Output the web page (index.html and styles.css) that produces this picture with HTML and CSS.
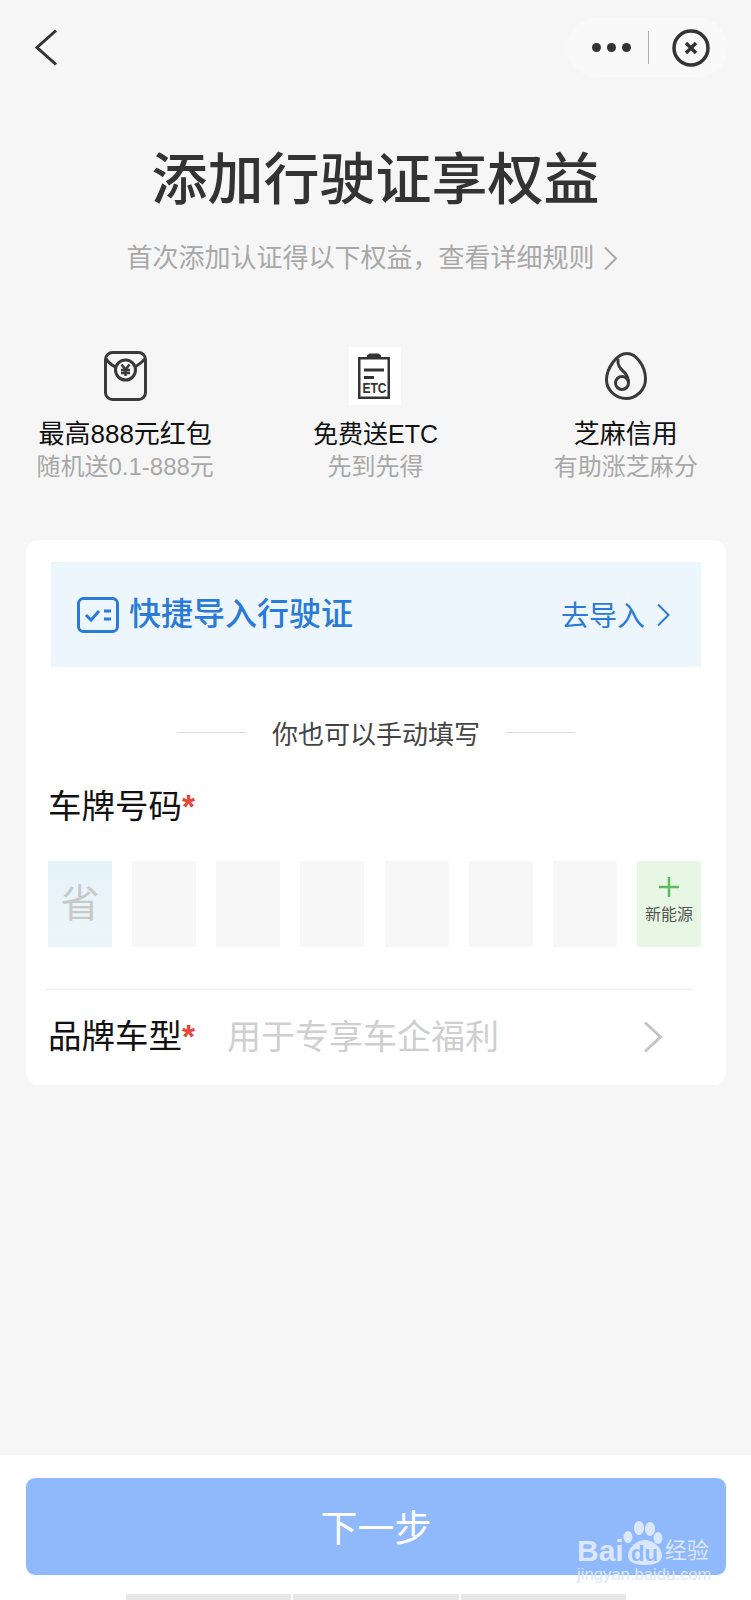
FILE: index.html
```html
<!DOCTYPE html>
<html lang="zh-CN">
<head>
    <meta charset="UTF-8">
    <meta name="viewport" content="width=device-width, initial-scale=1.0">
    <title>添加行驶证享权益</title>
    <link rel="stylesheet" href="styles.css">
</head>
<body>
    <div class="page">
        <header class="top-bar">
            <svg class="back" width="24" height="37" viewBox="0 0 24 37"><path d="M22 1.5 3 18.5 22 35.5"/></svg>
            <div class="capsule">
                <div class="dots"><span></span><span></span><span></span></div>
                <div class="capsule-line"></div>
                <svg class="close" width="38" height="38" viewBox="0 0 38 38"><circle cx="19" cy="19" r="17"/><path d="M14 14 24 24M24 14 14 24"/></svg>
            </div>
        </header>

        <h1>添加行驶证享权益</h1>
        <p class="subtitle">首次添加认证得以下权益，查看详细规则
            <svg width="15" height="25" viewBox="0 0 15 25"><path d="M2 1.5 13 12.5 2 23.5"/></svg>
        </p>

        <!-- 权益 -->
        <section class="benefits">
            <div class="benefit">
                <svg class="benefit-icon" width="44" height="50" viewBox="0 0 44 50">
                    <rect x="2.500" y="1.500" width="40" height="47" rx="7"/>
                    <path d="M3 8C6 12 10 15 13 16M42 8C38 12 34 15 31 16"/>
                    <circle cx="22.500" cy="19" r="10"/>
                    <path class="thin" d="M18.500 13.500 22.500 18.500 26.500 13.500M22.500 18.500V25M18 19H27M18 22H27"/>
                </svg>
                <div class="benefit-name">最高888元红包</div>
                <div class="benefit-desc">随机送0.1-888元</div>
            </div>
            <div class="benefit">
                <div class="etc-box">
                    <svg class="etc-icon" width="36" height="46" viewBox="0 0 36 46">
                        <path d="M1 4H10V2.500L12.500 0.500H21.500L24 2.500V4H33V46H1Z"/>
                        <rect class="etc-paper" x="3.500" y="6.500" width="27" height="37"/>
                        <rect x="7" y="15.500" width="20" height="3"/>
                        <rect x="7" y="23" width="10" height="3"/>
                    </svg>
                    <span class="etc-text">ETC</span>
                </div>
                <div class="benefit-name narrow">免费送ETC</div>
                <div class="benefit-desc">先到先得</div>
            </div>
            <div class="benefit">
                <svg class="benefit-icon" width="44" height="50" viewBox="0 0 44 50">
                    <path d="M23 2.500C32 2.500 41.500 15 41.500 28 41.500 39 32 47.500 22 47.500 12 47.500 2.500 39 2.500 29 2.500 17 13 2.500 23 2.500Z"/>
                    <path d="M14 8C13 15 17 18 21 22 23.500 25 24.500 28 24.500 32"/>
                    <circle cx="18" cy="32" r="6.500"/>
                </svg>
                <div class="benefit-name">芝麻信用</div>
                <div class="benefit-desc">有助涨芝麻分</div>
            </div>
        </section>

        <section class="card">
            <div class="import-bar">
                <svg class="import-icon" width="42" height="36" viewBox="0 0 42 36">
                    <rect x="1.500" y="1.500" width="39" height="33" rx="5"/>
                    <path d="M9 18 14 23 22 14M27 14H34M27 22H34"/>
                </svg>
                <span class="import-title">快捷导入行驶证</span>
                <span class="import-link">去导入</span>
                <svg class="import-arrow" width="14" height="24" viewBox="0 0 14 24"><path d="M2 1.500 12.500 12 2 22.500"/></svg>
            </div>

            <div class="or-row">
                <span class="or-line"></span>
                <span class="or-text">你也可以手动填写</span>
                <span class="or-line"></span>
            </div>

            <div class="field-label">车牌号码<span class="star">*</span></div>
            <div class="plate">
                <div class="plate-cell province">省</div>
                <div class="plate-cell"></div>
                <div class="plate-cell"></div>
                <div class="plate-cell"></div>
                <div class="plate-cell"></div>
                <div class="plate-cell"></div>
                <div class="plate-cell"></div>
                <div class="plate-cell energy">
                    <svg width="22" height="22" viewBox="0 0 22 22"><path d="M11 1V21M1 11H21"/></svg>
                    <span>新能源</span>
                </div>
            </div>

            <div class="brand-row">
                <div class="field-label brand-label">品牌车型<span class="star">*</span></div>
                <div class="brand-hint">用于专享车企福利</div>
                <svg class="brand-arrow" width="20" height="32" viewBox="0 0 20 32"><path d="M2 1.500 17.500 16 2 30.500"/></svg>
            </div>
        </section>

        <footer class="footer">
            <button class="next-btn">下一步</button>
            <div class="home-bar"><span></span><span></span><span></span></div>

            <!-- 水印 -->
            <div class="watermark">
                <div class="wm-top">
                    <span class="wm-bai">Bai</span>
                    <svg class="wm-paw" width="42" height="46" viewBox="0 0 42 46">
                        <ellipse cx="17" cy="8" rx="5" ry="7"/>
                        <ellipse cx="28" cy="9" rx="5" ry="7"/>
                        <ellipse cx="6" cy="17" rx="4.500" ry="6"/>
                        <ellipse cx="36" cy="18" rx="4.500" ry="6"/>
                        <path d="M23 20C31 20 40 27 40 36 40 42 33 45 23 45 13 45 6 42 6 36 6 27 15 20 23 20Z"/>
                    </svg>
                    <span class="wm-du">du</span>
                    <span class="wm-jy">经验</span>
                </div>
                <div class="wm-url">jingyan.baidu.com</div>
            </div>
        </footer>
    </div>
</body>
</html>
```

FILE: styles.css
```css
* {
    box-sizing: border-box;
}

body {
    margin: 0;
    padding: 0;
    background-color: #f6f6f6;
    color: #333;
    font-family: "Liberation Sans", "Noto Sans CJK SC", sans-serif;
}

svg path, svg circle, svg rect {
    fill: none;
}

.page {
    display: flex;
    flex-direction: column;
    height: 1600px;
    overflow: hidden;
}

/* top bar */
.top-bar {
    display: flex;
    align-items: center;
    justify-content: space-between;
    padding: 18px 23px 0 34px;
    height: 77px;
}

.back path {
    stroke: #333;
    stroke-width: 3;
}

.capsule {
    display: flex;
    align-items: center;
    width: 161px;
    height: 59px;
    padding-left: 25px;
    background-color: #f9f9f9;
    border-radius: 30px;
}

.dots {
    display: flex;
    gap: 6px;
}

.dots span {
    width: 9px;
    height: 9px;
    border-radius: 50%;
    background-color: #333;
}

.capsule-line {
    width: 1px;
    height: 33px;
    margin-left: 17px;
    background-color: #aaa;
}

.close {
    margin-left: 23px;
}

.close circle, .close path {
    stroke: #333;
    stroke-width: 3.5;
}

/* heading */
h1 {
    margin: 73px 0 0;
    font-size: 56px;
    line-height: 60px;
    font-weight: 500;
    text-align: center;
    color: #333;
}

.subtitle {
    display: flex;
    align-items: center;
    justify-content: center;
    gap: 8px;
    margin: 30px 0 0;
    padding-right: 7px;
    font-size: 26px;
    line-height: 36px;
    color: #a8a8a8;
}

.subtitle svg path {
    stroke: #a8a8a8;
    stroke-width: 2;
}

/* benefits */
.benefits {
    display: grid;
    grid-template-columns: repeat(3, 1fr);
    margin-top: 75px;
}

.benefit {
    display: flex;
    flex-direction: column;
    align-items: center;
}

.benefit-icon {
    margin-bottom: 16px;
}

.benefit-icon rect, .benefit-icon path, .benefit-icon circle {
    stroke: #3a3a3a;
    stroke-width: 3;
}

.benefit-icon .thin {
    stroke-width: 2.500;
}

.etc-box {
    position: relative;
    display: flex;
    align-items: center;
    justify-content: center;
    width: 52px;
    height: 58px;
    margin: -4px 0 12px;
    background-color: #fff;
}

.etc-icon path, .etc-icon rect {
    fill: #333;
}

.etc-icon .etc-paper {
    fill: #fff;
}

.etc-text {
    position: absolute;
    left: 0;
    right: 2px;
    top: 33px;
    font-size: 12px;
    line-height: 16px;
    font-weight: 700;
    text-align: center;
    color: #333;
    transform: scaleY(1.250);
}

.benefit-name {
    font-size: 26px;
    line-height: 34px;
    color: #111;
}

.benefit-name.narrow {
    font-size: 25px;
}

.benefit-desc {
    font-size: 24px;
    line-height: 32px;
    color: #a8a8a8;
}

/* card */
.card {
    margin: 57px 25px 0 26px;
    padding: 22px 25px 0;
    height: 545px;
    background-color: #fff;
    border-radius: 12px;
}

.import-bar {
    display: flex;
    align-items: center;
    height: 105px;
    padding: 0 31px 0 26px;
    background-color: #eef6fd;
}

.import-icon rect, .import-icon path {
    stroke: #2a7ad8;
    stroke-width: 3;
}

.import-title {
    flex: 1;
    margin: 0 0 8px 10px;
    font-size: 32px;
    font-weight: 500;
    color: #2a7ad8;
}

.import-link {
    margin-bottom: 2px;
    font-size: 28px;
    color: #2a7ad8;
}

.import-arrow {
    margin-left: 11px;
}

.import-arrow path {
    stroke: #2a7ad8;
    stroke-width: 2;
}

.or-row {
    display: flex;
    align-items: center;
    justify-content: center;
    gap: 26px;
    margin-top: 47px;
    height: 36px;
}

.or-line {
    width: 69px;
    height: 1px;
    background-color: #ddd;
}

.or-text {
    font-size: 26px;
    color: #444;
}

.field-label {
    margin: 37px 0 0 -3px;
    font-size: 33.500px;
    line-height: 40px;
    color: #111;
}

.star {
    font-weight: 700;
    color: #e8443a;
}

.plate {
    display: flex;
    justify-content: space-between;
    margin: 34px 0 0 -3px;
}

.plate-cell {
    display: flex;
    flex-direction: column;
    align-items: center;
    width: 64px;
    height: 86px;
    background-color: #f7f7f7;
}

.province {
    justify-content: center;
    padding-bottom: 8px;
    background: linear-gradient(#e6f2fa, #ebf7f6);
    font-size: 39px;
    color: #c8c8c8;
}

.energy {
    padding-top: 15px;
    background-color: #e8f7e4;
    font-size: 16px;
    line-height: 24px;
    color: #555;
}

.energy svg {
    margin-bottom: 5px;
}

.energy path {
    stroke: #5cbb60;
    stroke-width: 2.500;
}

.brand-row {
    display: flex;
    align-items: center;
    margin: 42px 9px 0 -6px;
    padding-left: 3px;
    height: 95px;
    border-top: 1px solid #eee;
}

.brand-label {
    margin: 0;
}

.brand-row .star {
    margin-right: 32px;
}

.brand-hint {
    flex: 1;
    margin-bottom: 6px;
    font-size: 34px;
    color: #cfcfcf;
}

.brand-arrow {
    margin-right: 29px;
}

.brand-arrow path {
    stroke: #c4c4c4;
    stroke-width: 3;
}

/* footer */
.footer {
    position: relative;
    display: flex;
    flex-direction: column;
    align-items: center;
    margin-top: auto;
    height: 145px;
    padding: 23px 25px 0 26px;
    background-color: #fff;
}

.next-btn {
    width: 100%;
    height: 97px;
    padding: 0 0 2px;
    border: none;
    border-radius: 9px;
    background-color: #8fb9fb;
    color: #fff;
    font-family: inherit;
    font-size: 37px;
}

.home-bar {
    display: flex;
    gap: 2px;
    width: 500px;
    height: 6px;
    margin-top: 19px;
}

.home-bar span {
    flex: 1;
    background-color: #e8e8e8;
}

.watermark {
    position: absolute;
    left: 577px;
    top: 65px;
    width: 134px;
    color: #dbe7fb;
}

.wm-top {
    position: relative;
    display: flex;
    align-items: flex-end;
    height: 46px;
    white-space: nowrap;
}

.wm-bai {
    font-size: 30px;
    line-height: 30px;
    font-weight: 700;
}

.wm-paw {
    flex-shrink: 0;
    margin-left: -2px;
}

.wm-paw ellipse, .wm-paw path {
    fill: #dbe7fb;
}

.wm-du {
    position: absolute;
    left: 54px;
    bottom: 1px;
    font-size: 22px;
    line-height: 22px;
    font-weight: 700;
    color: #8fb9fb;
}

.wm-jy {
    margin: 0 0 1px 1px;
    font-size: 22px;
    line-height: 28px;
}

.wm-url {
    font-size: 16.700px;
    line-height: 18px;
    white-space: nowrap;
}
```
